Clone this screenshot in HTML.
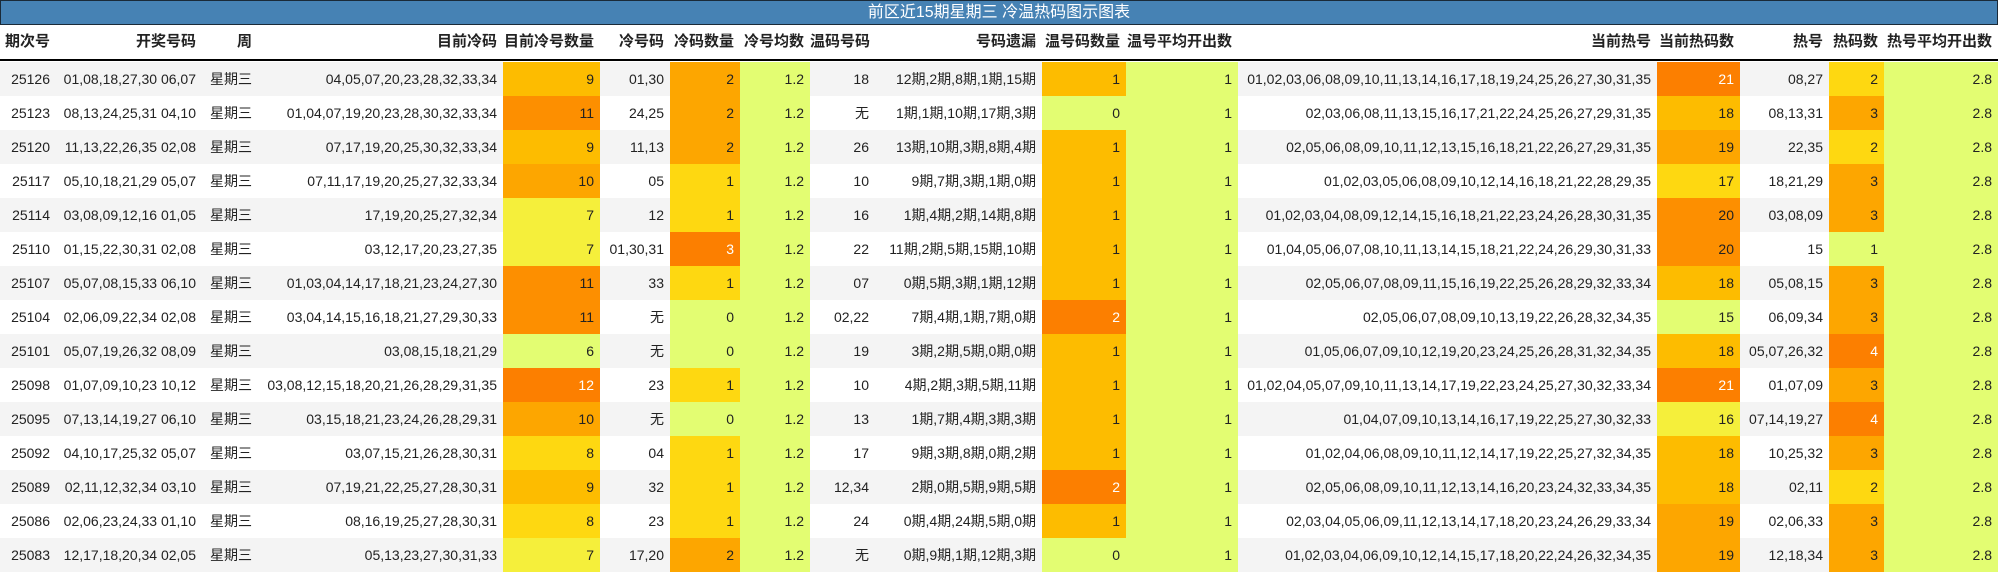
<!DOCTYPE html>
<html><head><meta charset="utf-8">
<style>
*{margin:0;padding:0;box-sizing:border-box}
body{width:1998px;height:573px;background:#fff;font-family:"Liberation Sans Narrow","Liberation Sans","Noto Sans CJK SC",sans-serif;font-size:14px;color:#222;overflow:hidden;position:relative}
.t{position:absolute;left:0;top:0;width:1998px;height:25px;background:#4682b4;border:1px solid #1a2a38;color:#fff;text-align:center;line-height:23px;font-size:16px;font-family:"Liberation Sans","Noto Sans CJK SC",sans-serif}
.r{position:absolute;left:0;width:1998px;height:34px;display:flex}
.r div{height:100%;line-height:34px;text-align:right;padding-right:6px;white-space:nowrap;overflow:visible}
.h{top:25px;height:36px;border-bottom:2px solid #000;font-weight:bold;font-family:"Liberation Sans","Noto Sans CJK SC",sans-serif;font-size:15px}
.h div{line-height:34px}
.a{background:#fdbc00}.o1{background:#fda600}.o2{background:#fd8f00}.o3{background:#fc7f00;color:#fff}.y{background:#fed811}.y1{background:#f5ef3b}.g{background:#e3fd72}
.s{background:#f4f4f4}
</style></head><body>
<div class="t">前区近15期星期三 冷温热码图示图表</div>
<div id="w"></div>
<script>
var W=[56,146,56,245,97,70,70,70,65,167,84,112,419,83,89,55,114];
var H=["期次号","开奖号码","周","目前冷码","目前冷号数量","冷号码","冷码数量","冷号均数","温码号码","号码遗漏","温号码数量","温号平均开出数","当前热号","当前热码数","热号","热码数","热号平均开出数"];
var D=[
["25126","01,08,18,27,30 06,07","04,05,07,20,23,28,32,33,34","9a","01,30","2o1","18","12期,2期,8期,1期,15期","1a","01,02,03,06,08,09,10,11,13,14,16,17,18,19,24,25,26,27,30,31,35","21o3","08,27","2y"],
["25123","08,13,24,25,31 04,10","01,04,07,19,20,23,28,30,32,33,34","11o2","24,25","2o1","无","1期,1期,10期,17期,3期","0g","02,03,06,08,11,13,15,16,17,21,22,24,25,26,27,29,31,35","18a","08,13,31","3o1"],
["25120","11,13,22,26,35 02,08","07,17,19,20,25,30,32,33,34","9a","11,13","2o1","26","13期,10期,3期,8期,4期","1a","02,05,06,08,09,10,11,12,13,15,16,18,21,22,26,27,29,31,35","19o1","22,35","2y"],
["25117","05,10,18,21,29 05,07","07,11,17,19,20,25,27,32,33,34","10o1","05","1y","10","9期,7期,3期,1期,0期","1a","01,02,03,05,06,08,09,10,12,14,16,18,21,22,28,29,35","17y","18,21,29","3o1"],
["25114","03,08,09,12,16 01,05","17,19,20,25,27,32,34","7y1","12","1y","16","1期,4期,2期,14期,8期","1a","01,02,03,04,08,09,12,14,15,16,18,21,22,23,24,26,28,30,31,35","20o2","03,08,09","3o1"],
["25110","01,15,22,30,31 02,08","03,12,17,20,23,27,35","7y1","01,30,31","3o3","22","11期,2期,5期,15期,10期","1a","01,04,05,06,07,08,10,11,13,14,15,18,21,22,24,26,29,30,31,33","20o2","15","1g"],
["25107","05,07,08,15,33 06,10","01,03,04,14,17,18,21,23,24,27,30","11o2","33","1y","07","0期,5期,3期,1期,12期","1a","02,05,06,07,08,09,11,15,16,19,22,25,26,28,29,32,33,34","18a","05,08,15","3o1"],
["25104","02,06,09,22,34 02,08","03,04,14,15,16,18,21,27,29,30,33","11o2","无","0g","02,22","7期,4期,1期,7期,0期","2o3","02,05,06,07,08,09,10,13,19,22,26,28,32,34,35","15g","06,09,34","3o1"],
["25101","05,07,19,26,32 08,09","03,08,15,18,21,29","6g","无","0g","19","3期,2期,5期,0期,0期","1a","01,05,06,07,09,10,12,19,20,23,24,25,26,28,31,32,34,35","18a","05,07,26,32","4o3"],
["25098","01,07,09,10,23 10,12","03,08,12,15,18,20,21,26,28,29,31,35","12o3","23","1y","10","4期,2期,3期,5期,11期","1a","01,02,04,05,07,09,10,11,13,14,17,19,22,23,24,25,27,30,32,33,34","21o3","01,07,09","3o1"],
["25095","07,13,14,19,27 06,10","03,15,18,21,23,24,26,28,29,31","10o1","无","0g","13","1期,7期,4期,3期,3期","1a","01,04,07,09,10,13,14,16,17,19,22,25,27,30,32,33","16y1","07,14,19,27","4o3"],
["25092","04,10,17,25,32 05,07","03,07,15,21,26,28,30,31","8y","04","1y","17","9期,3期,8期,0期,2期","1a","01,02,04,06,08,09,10,11,12,14,17,19,22,25,27,32,34,35","18a","10,25,32","3o1"],
["25089","02,11,12,32,34 03,10","07,19,21,22,25,27,28,30,31","9a","32","1y","12,34","2期,0期,5期,9期,5期","2o3","02,05,06,08,09,10,11,12,13,14,16,20,23,24,32,33,34,35","18a","02,11","2y"],
["25086","02,06,23,24,33 01,10","08,16,19,25,27,28,30,31","8y","23","1y","24","0期,4期,24期,5期,0期","1a","02,03,04,05,06,09,11,12,13,14,17,18,20,23,24,26,29,33,34","19o1","02,06,33","3o1"],
["25083","12,17,18,20,34 02,05","05,13,23,27,30,31,33","7y1","17,20","2o1","无","0期,9期,1期,12期,3期","0g","01,02,03,04,06,09,10,12,14,15,17,18,20,22,24,26,32,34,35","19o1","12,18,34","3o1"]];
function cell(v,w,c){return '<div style="width:'+w+'px"'+(c?' class="'+c+'"':'')+'>'+v+'</div>';}
function sp(v){var m=v.match(/^(\d+)([a-z]+\d?)$/);return [m[1],m[2]];}
var h='<div class="r h">';H.forEach(function(t,i){h+=cell(t,W[i]);});h+='</div>';
D.forEach(function(d,k){
 var row='<div class="r'+(k%2==0?' s':'')+'" style="top:'+(62+k*34)+'px">';
 var a=sp(d[3]),b=sp(d[5]),c=sp(d[8]),e=sp(d[10]),f=sp(d[12]);
 var cs=[[d[0]],[d[1]],["星期三"],[d[2]],[a[0],a[1]],[d[4]],[b[0],b[1]],["1.2","g"],[d[6]],[d[7]],[c[0],c[1]],["1","g"],[d[9]],[e[0],e[1]],[d[11]],[f[0],f[1]],["2.8","g"]];
 cs.forEach(function(x,i){row+=cell(x[0],W[i],x[1]);});
 row+='</div>';h+=row;});
document.getElementById('w').innerHTML=h;
</script>
</body></html>
